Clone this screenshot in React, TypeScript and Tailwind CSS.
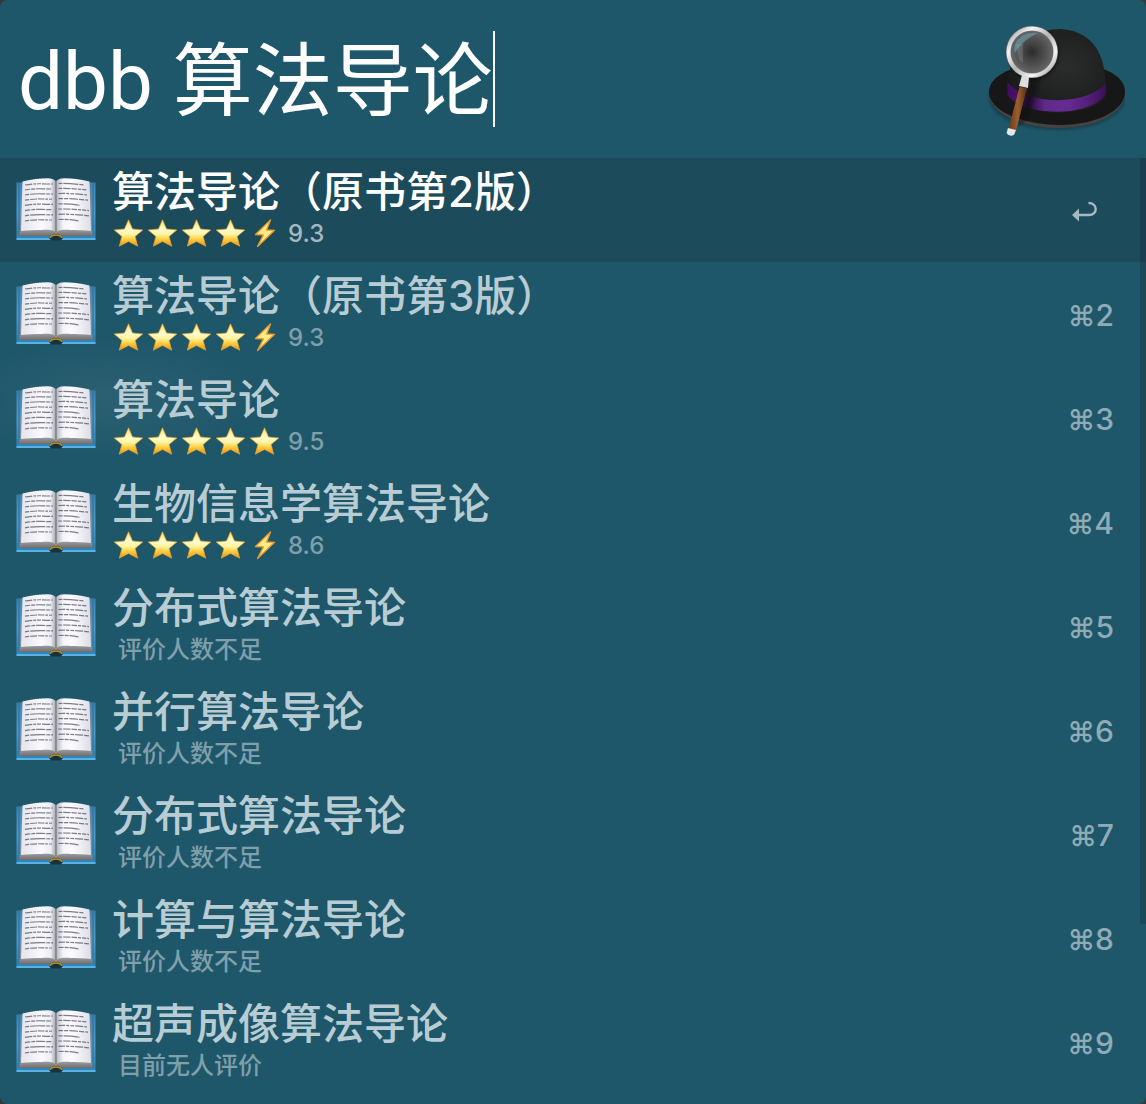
import React, { useId } from "react";

type Item = { title: string; stars?: string; note: string };

const items: Item[] = [
  { title: "算法导论（原书第2版）", stars: "ffffh", note: "9.3" },
  { title: "算法导论（原书第3版）", stars: "ffffh", note: "9.3" },
  { title: "算法导论", stars: "fffff", note: "9.5" },
  { title: "生物信息学算法导论", stars: "ffffh", note: "8.6" },
  { title: "分布式算法导论", note: "评价人数不足" },
  { title: "并行算法导论", note: "评价人数不足" },
  { title: "分布式算法导论", note: "评价人数不足" },
  { title: "计算与算法导论", note: "评价人数不足" },
  { title: "超声成像算法导论", note: "目前无人评价" },
];

const lineTops = [7, 12, 17, 22.2, 27.4, 32.6, 37.8, 43];
const lineDashes = ["7 1 3 1 4 1 8 1", "5 1 4 1 9 1", "4 1 15 1", "4 1 7 1 6 1 3 1"];
const rightEnds = [68, 71, 71, 72, 64, 73, 73, 63];

function Book() {
  const id = useId();
  return (
    <svg viewBox="0 0 80 64" className="h-16 w-20 shrink-0" aria-hidden="true">
      <defs>
        <linearGradient id={id + "l"} x1="0" x2="1">
          <stop offset="0" stopColor="#e4e4ec" />
          <stop offset=".6" stopColor="#fafaff" />
          <stop offset=".85" stopColor="#ececf3" />
          <stop offset="1" stopColor="#a2a2ac" />
        </linearGradient>
        <linearGradient id={id + "r"} x1="0" x2="1">
          <stop offset="0" stopColor="#b4b4bd" />
          <stop offset=".2" stopColor="#f3f3fa" />
          <stop offset=".45" stopColor="#fcfcff" />
          <stop offset="1" stopColor="#dddde8" />
        </linearGradient>
        <linearGradient id={id + "c"} x1="0" x2="0" y1="0" y2="1">
          <stop offset="0" stopColor="#3c83b2" />
          <stop offset=".5" stopColor="#4c9acb" />
          <stop offset="1" stopColor="#2f82b6" />
        </linearGradient>
        <linearGradient id={id + "e"} x1="0" x2="0" y1="0" y2="1">
          <stop offset="0" stopColor="#a9a9a9" />
          <stop offset="1" stopColor="#6e6e6e" />
        </linearGradient>
      </defs>
      <path d="M.5 4.500H79.500V62H.5Z" fill={`url(#${id}c)`} />
      <path d="M3 5V58M77 5V58" stroke="#2f6c97" strokeWidth="1" />
      <path d="M.5 61H79.500" stroke="#67c2ef" strokeWidth="1.600" />
      <path d="M7 51L40 50L73 51L76.500 58H46C44 55.500 36 55.500 34 58H3.500Z" fill={`url(#${id}e)`} />
      <path d="M6 4L3.500 58L7 52ZM74 4L76.500 58L73 52Z" fill="#8b8b90" />
      <path d="M6.500 3.500C16 1.500 24 .3 32 .3C36 .4 39 1.500 40 4V54.500C38 52 33 51.700 26 51.900C19 52 12 52 5 53Z" fill={`url(#${id}l)`} />
      <path d="M73.500 3.500C64 1.500 56 .3 48 .3C44 .4 41 1.500 40 4V54.500C42 52 47 51.700 54 51.900C61 52 68 52 75 53Z" fill={`url(#${id}r)`} />
      <path d="M40 4V54" stroke="#75757d" strokeWidth="1.200" />
      <path d="M33 60C34.500 54.500 45.500 54.500 47 60L45 62.500H35Z" fill="#18323e" />
      <path d="M34 60C35.500 56 44.500 56 46 60" fill="none" stroke="#b8931d" strokeWidth="1.500" />
      {lineTops.map((y, i) => (
        <g key={y} fill="none" stroke="#454550" strokeWidth="1.200" opacity=".68">
          <path d={`M9 ${y}Q18 ${y - 1.5} 26 ${y - 1.2}T${37 - (i % 2)} ${y - 1}`} strokeDasharray={lineDashes[i % 4]} />
          <path d={`M42.500 ${y - 1.5}Q54 ${y - 2} ${rightEnds[i]} ${y}`} strokeDasharray={lineDashes[(i + 2) % 4]} />
        </g>
      ))}
    </svg>
  );
}

function Star() {
  const id = useId();
  return (
    <svg viewBox="0 0 34 30" className="h-[30px] w-[34px]" aria-hidden="true">
      <defs>
        <linearGradient id={id} x1="0" x2="0" y1="0" y2="1">
          <stop offset="0" stopColor="#ffdf55" />
          <stop offset=".35" stopColor="#fffbd2" />
          <stop offset=".55" stopColor="#fff4a0" />
          <stop offset=".75" stopColor="#fccb3d" />
          <stop offset="1" stopColor="#ee921b" />
        </linearGradient>
      </defs>
      <path d="M15.500 .8L19.500 10L29.800 11L22.100 17.400L24.700 27.200L15.500 22.400L6.300 27.200L8.900 17.400L1.200 11L11.500 10Z" fill={`url(#${id})`} stroke="#eba42b" strokeWidth=".7" strokeLinejoin="round" />
    </svg>
  );
}

function Bolt() {
  return (
    <svg viewBox="0 0 34 30" className="h-[30px] w-[34px]" aria-hidden="true">
      <path d="M21.500 1L6.500 15.500L14.500 15.900L8.500 27.500L25.500 11.300L17.500 11Z" fill="#ffe98a" stroke="#f1a023" strokeWidth="1.300" strokeLinejoin="round" />
    </svg>
  );
}

function Hat() {
  return (
    <svg viewBox="0 0 140 114" className="mt-2 h-[114px] w-[140px] shrink-0" aria-hidden="true">
      <defs>
        <radialGradient id="crown" cx=".6" cy=".45" r=".6">
          <stop offset="0" stopColor="#2b2d2d" />
          <stop offset="1" stopColor="#1a1b1b" />
        </radialGradient>
        <linearGradient id="band" x1="0" x2="1">
          <stop offset="0" stopColor="#430e5e" />
          <stop offset=".1" stopColor="#4b1169" />
          <stop offset=".22" stopColor="#2b0d3d" />
          <stop offset=".38" stopColor="#5f2a8a" />
          <stop offset=".6" stopColor="#672b94" />
          <stop offset=".8" stopColor="#54217a" />
          <stop offset="1" stopColor="#3d0d57" />
        </linearGradient>
        <linearGradient id="rim" x1="0" x2="1" y1="0" y2="1">
          <stop offset="0" stopColor="#8d8d8d" />
          <stop offset=".25" stopColor="#f4f4f4" />
          <stop offset=".5" stopColor="#b5b5b5" />
          <stop offset=".75" stopColor="#f5f5f5" />
          <stop offset="1" stopColor="#8b8b8b" />
        </linearGradient>
        <radialGradient id="lens" cx=".5" cy=".5" r=".55">
          <stop offset="0" stopColor="#2b2b2b" />
          <stop offset="1" stopColor="#6f7071" />
        </radialGradient>
        <linearGradient id="wood" x1="0" x2="1">
          <stop offset="0" stopColor="#6b3a1a" />
          <stop offset=".5" stopColor="#98602f" />
          <stop offset="1" stopColor="#5a2f14" />
        </linearGradient>
        <filter id="soft" x="-20%" y="-20%" width="140%" height="140%">
          <feGaussianBlur stdDeviation="1.500" />
        </filter>
      </defs>
      <ellipse cx="72" cy="72" rx="68" ry="32" fill="#0c2730" opacity=".5" filter="url(#soft)" />
      <path d="M4 67C4 54 17 45 33 42H115C131 47 140 55 140 67C140 88 110 102 75 102C38 102 4 88 4 67Z" fill="#454342" />
      <path d="M4 66C4 54 17 45 33 42H115C131 47 140 55 140 66C140 85 110 99 75 99C38 99 4 85 4 66Z" fill="#171717" />
      <path d="M24 60C22 25 42 4 75 3C104 4 121 25 120 58V72C104 92 40 92 23 70Z" fill="url(#crown)" />
      <path d="M22.500 56C41 80 102 80 121 57V68C105 92 38 91 22.500 69Z" fill="url(#band)" />
      <path d="M45 48L33 101L42 92L56 50Z" fill="#090909" opacity=".5" filter="url(#soft)" />
      <circle cx="49" cy="28" r="25" fill="#050505" opacity=".5" filter="url(#soft)" />
      <circle cx="47" cy="26" r="23" fill="url(#lens)" />
      <path d="M29 23C30 12 41 5 53 7C43 12 36 17 30 27Z" fill="#6997a4" opacity=".7" />
      <path d="M31 18H38V37L34 33Z" fill="#aaa" opacity=".25" />
      <circle cx="47" cy="26" r="23.500" fill="none" stroke="#777" strokeWidth="5" />
      <circle cx="47" cy="26" r="23.500" fill="none" stroke="url(#rim)" strokeWidth="4" />
      <path d="M37 49L44 51L43 62L34 60Z" fill="#dededf" />
      <path d="M34.500 61L42 62L31 105L23.500 103Z" fill="url(#wood)" />
      <path d="M23 102L31 104L29 109Q24 111 21.500 107Z" fill="#e5e5e5" />
    </svg>
  );
}

function Return() {
  return (
    <svg viewBox="0 0 28 24" className="mt-0.5 h-6 w-7" role="img" aria-label="Return">
      <path d="M1 15L8 8.500V21.500Z" fill="currentColor" />
      <path d="M7 15H18C27 15 27 3 17.500 3" fill="none" stroke="currentColor" strokeWidth="2.400" />
    </svg>
  );
}

export default function App() {
  return (
    <main className="bg-[#363a3d] font-['Inter','Noto_Sans_CJK_SC',sans-serif]">
      <div className="overflow-hidden rounded-lg bg-[#1f576a]">
        <header className="flex h-[158px] items-center justify-between pl-[18px] pr-[21px]">
          <div className="flex min-w-0 flex-1 items-center">
            <input
              autoFocus
              aria-label="Search"
              defaultValue="dbb 算法导论"
              className="-mr-2 field-sizing-content max-w-full bg-transparent pr-2 pt-1.5 font-['Roboto','Noto_Sans_CJK_SC',sans-serif] text-[80px] leading-normal text-white caret-transparent outline-none"
            />
            <span className="h-24 w-0.5 shrink-0 bg-white" />
          </div>
          <Hat />
        </header>
        <div className="relative pb-[10px]">
          <ul className="bg-[radial-gradient(ellipse_150px_60px_at_110px_240px,#ffffff0e,#ffffff00)]">
            {items.map((item, i) => (
              <li key={i}>
                <button className={`flex h-[104px] w-full items-center pl-4 pr-8 text-left ${i === 0 ? "bg-[#1c4b5c] text-white" : "text-[#b8ccd3]"}`}>
                  <Book />
                  <span className="ml-4 flex min-w-0 flex-1 flex-col pb-[5px]">
                    <span className="truncate text-[42px] font-medium leading-[52px]">{item.title}</span>
                    <span className={`flex h-8 items-center pl-px text-2xl font-medium leading-8 ${i === 0 ? "text-[#a6b9c0]" : "text-[#7f9fab]"}`}>
                      {item.stars?.split("").map((s, k) => (s === "f" ? <Star key={k} /> : <Bolt key={k} />))}
                      <span className="ml-[5px]">{item.note}</span>
                    </span>
                  </span>
                  <span className={`flex items-center pt-0.5 text-3xl font-medium ${i === 0 ? "mr-[15px] text-[#a6b9c0]" : "text-[#8facb6]"}`}>
                    {i === 0 ? <Return /> : <span><span className="text-[28px]">⌘</span>{i + 1}</span>}
                  </span>
                </button>
              </li>
            ))}
          </ul>
          <div className="absolute right-0 top-0 h-[81%] w-1.5 bg-black/15" />
        </div>
      </div>
    </main>
  );
}
